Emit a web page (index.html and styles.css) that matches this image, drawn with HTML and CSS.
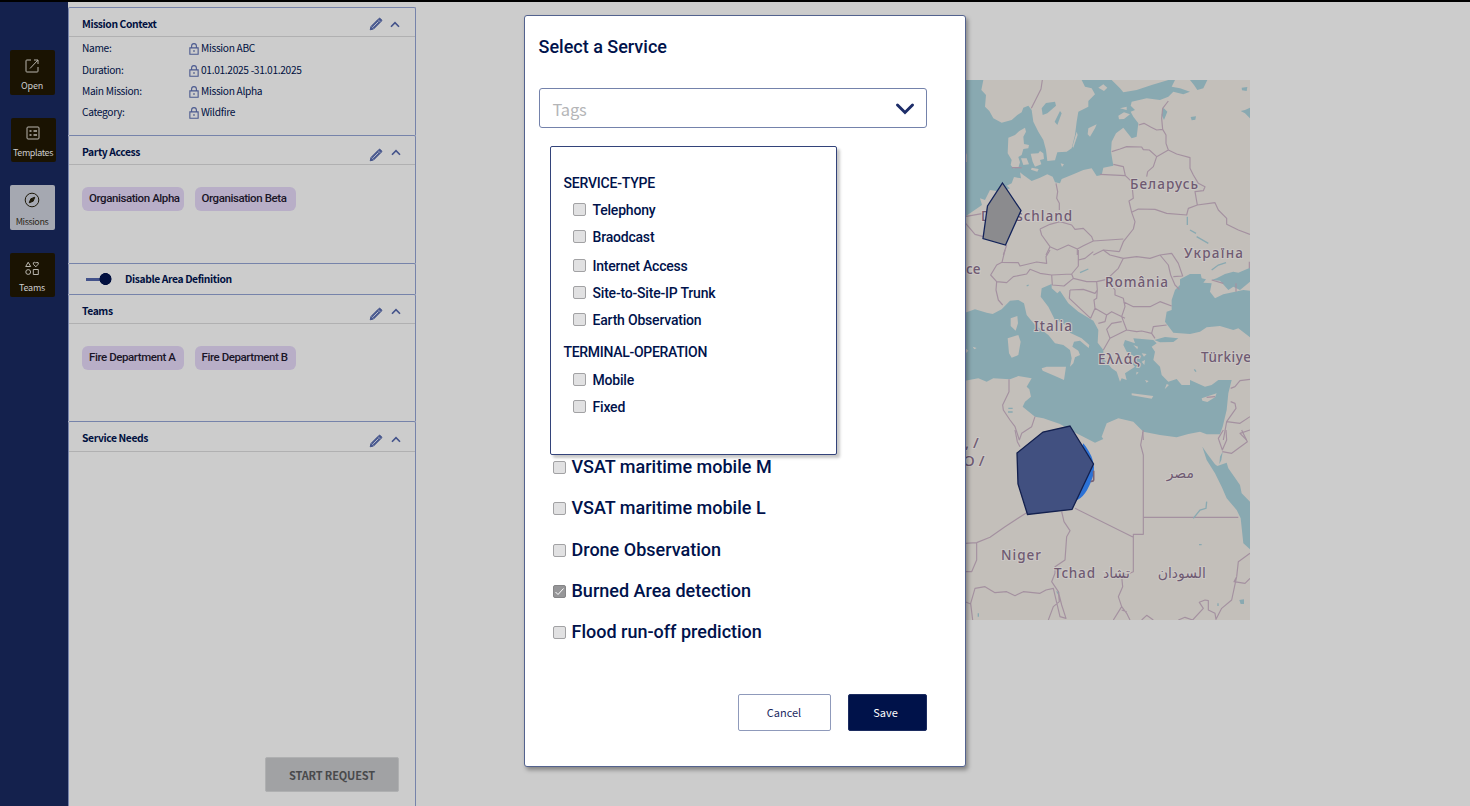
FILE: index.html
```
<!DOCTYPE html>
<html lang="en">
<head>
<meta charset="utf-8">
<title>Missions</title>
<link rel="stylesheet" href="styles.css">
</head>
<body>
<svg width="0" height="0" class="defs">
  <symbol id="pencil" viewBox="0 0 14 14"><path d="M1.2 12.8 2 9.400 9.800 1.600q.8-.8 1.600 0l1 1q.8.8 0 1.600L4.600 12z" fill="#4a5a91" stroke="#3d4d85" stroke-width=".9"/><path d="M4.200 9.800 9.400 4.600" stroke="#c3c6d0" stroke-width=".9"/><path d="m9 2.600 2.600 2.600M2.600 9.600l1.900 1.900" stroke="#b3b8c8" stroke-width=".7"/></symbol>
  <symbol id="up" viewBox="0 0 10 7"><path d="M1 5.800 5 1.600l4 4.200" fill="none" stroke="#43528a" stroke-width="1.600"/></symbol>
  <symbol id="lock" viewBox="0 0 9 11"><path d="M.7 4.500h7.600v5.800H.7zM2.300 4.500V2.800a2.200 2.200 0 0 1 4.400 0v1.700" fill="none" stroke="#4a598f" stroke-width="1"/><path d="M3.900 6.700h1.200v1.400H3.900z" fill="#3a4a83"/></symbol>
</svg>
<div class="app">
  <nav class="side">
    <a class="nav"><svg width="16" height="16" viewBox="0 0 16 16"><path d="M7 2H2.800Q2 2 2 2.800v10.400q0 .8.8.8h10.400q.8 0 .8-.8V9M10 2h4v4M14 2 6 10.500"/></svg><span>Open</span></a>
    <a class="nav shifted"><svg width="16" height="16" viewBox="0 0 16 16"><rect x="2" y="2" width="12" height="12" rx="1"/><path d="M4.500 6h2M8.500 6H12M4.500 10h2M8.500 10H12" stroke-width="1.500"/></svg><span>Templates</span></a>
    <a class="nav active"><svg width="16" height="16" viewBox="0 0 16 16"><circle cx="8" cy="8" r="6.800"/><path d="m10.800 5.200-1.600 4-4 1.600 1.600-4z" class="solid"/><circle cx="8" cy="8" r=".6"/></svg><span>Missions</span></a>
    <a class="nav last"><svg width="16" height="16" viewBox="0 0 16 16"><path d="M4.200 2.200 1.700 6.500h5zM11.800 6.800 9.400 4.200q-.8-1.900 1.200-1.900.8 0 1.200.9.4-.9 1.200-.9 2 0 1.200 1.900zM9.300 9.500h5v5h-5z"/><circle cx="4.200" cy="12" r="2.400"/></svg><span>Teams</span></a>
  </nav>
  <aside class="panel">
    <section class="card context">
      <header><h2>Mission Context</h2><svg class="pen"><use href="#pencil"/></svg><svg class="caret"><use href="#up"/></svg></header>
      <dl>
        <dt>Name:</dt><dd><svg><use href="#lock"/></svg>Mission ABC</dd>
        <dt>Duration:</dt><dd><svg><use href="#lock"/></svg>01.01.2025 -31.01.2025</dd>
        <dt>Main Mission:</dt><dd><svg><use href="#lock"/></svg>Mission Alpha</dd>
        <dt>Category:</dt><dd><svg><use href="#lock"/></svg>Wildfire</dd>
      </dl>
    </section>
    <section class="card party">
      <header><h2>Party Access</h2><svg class="pen low"><use href="#pencil"/></svg><svg class="caret"><use href="#up"/></svg></header>
      <div class="chips"><span>Organisation Alpha</span><span>Organisation Beta</span></div>
    </section>
    <section class="card area"><i class="toggle"></i><h2>Disable Area Definition</h2></section>
    <section class="card teams">
      <header><h2>Teams</h2><svg class="pen low"><use href="#pencil"/></svg><svg class="caret"><use href="#up"/></svg></header>
      <div class="chips"><span>Fire Department A</span><span>Fire Department B</span></div>
    </section>
    <section class="card needs">
      <header><h2>Service Needs</h2><svg class="pen low"><use href="#pencil"/></svg><svg class="caret"><use href="#up"/></svg></header>
      <button class="start">START REQUEST</button>
    </section>
  </aside>
  <main class="stage">
    <svg class="map" width="285" height="540" viewBox="965 80 285 540">
      <rect x="965" y="80" width="285" height="540" class="land"/>
      <!-- northern Europe -->
      <g transform="translate(960 75) scale(.33333)">
        <path class="sea" d="M15 15H70L64 45 78 60 75 95 88 108 100 130 125 143 155 135 172 120 185 112 190 98 205 92 215 105 220 140 235 170 250 195 258 225 262 258 285 256 292 232 320 230 335 220 345 180 350 140 355 110 385 95 385 78 405 58 395 40 375 35 365 15H455L480 40 490 52 530 45 575 30 625 15H645L635 35 660 40 690 50 670 58 640 50 625 65 600 75 560 70 515 80 512 92 525 105 512 110 520 125 535 145 530 185 515 190 490 158 468 175 455 200 453 230 460 272 430 278 425 300 410 303 395 280 370 285 340 298 305 312 300 325 285 322 278 305 262 298 240 308 215 318 190 300 180 292 183 310 162 306 155 325 140 332 150 340 125 350 90 345 75 375 60 370 66 390 30 415 15 425z"/>
        <path class="sea" d="M690 15H742L730 40 712 45 702 30zM245 100 258 84 285 80 288 92 262 115 248 120zM300 108 305 115 292 150 284 140zM610 98 622 110 612 135 605 120zM845 38 862 36 860 48 846 46zM692 126 708 124 706 134 695 136zM842 108 855 105 870 98V130L855 115z"/>
        <path class="land" d="M145 188 165 180 178 168 195 158 198 170 190 185 192 207 207 210 205 220 190 222 185 240 175 246 180 262 175 278 160 280 152 270 155 255 143 235zM183 250 200 250 207 268 190 270zM212 236 235 235 240 228 250 235 252 252 240 255 244 268 225 275 218 260zM215 278 236 282 232 290 213 284zM385 160 410 148 405 160 390 185 383 178zM475 122 492 112 510 118 492 132 477 133zM480 100 500 95 500 105zM350 170 353 180 340 218 337 215zM302 265 312 268 306 276zM415 38 430 28 442 38 432 48z"/>
        <path class="line" d="M247 15 243 42 228 72 214 100M155 278H185M536 150 552 145 572 156 590 165 608 163 605 130 608 100 625 78M608 163 618 180 618 205 625 225 590 245 568 225 550 224 545 216 500 215 480 222 455 230M625 225 650 237 690 248 690 280 700 300 715 325 735 335 730 347 705 350 712 390M590 245 580 275 563 290 560 305M460 268 490 275 496 302 420 298M496 302 515 320 520 370 507 378 515 412 525 440 520 462 490 500 478 530M515 412 535 402 585 403 620 415 680 420 685 400 712 390 765 383 775 405 800 430 800 448 835 465 870 478M288 325 293 350 290 370 298 385 298 405M240 462 270 448 300 440 335 450 345 463 370 460 395 485 400 498 490 492M400 498 370 512 352 522 325 510 292 525 270 515 245 480 240 462M352 522V540M270 515 258 540M15 425 70 415M15 443 45 478 70 485M140 510 130 540M400 540 430 525 478 530"/>
        <path class="river" d="M682 425V450M690 465 708 475M710 485 745 505"/>
      </g>
      <!-- Mediterranean and Black Sea -->
      <g transform="translate(960 250) scale(.33333)">
        <path class="sea" d="M15 188 45 178 80 188 98 192 125 178 150 152 175 150 192 160 200 195 225 225 265 255 285 280 310 285 330 300 335 325 330 350 340 340 345 322 360 315 355 302 337 290 342 275 360 272 386 294 388 285 365 265 330 248 325 230 300 215 285 210 265 170 242 140 245 115 275 102 275 115 292 130 300 122 325 160 355 185 400 212 415 240 413 278 430 300 430 325 455 355 470 365 480 395 485 385 500 390 495 370 525 350 515 340 525 320 500 305 490 285 495 270 525 280 520 265 580 270 590 280 575 290 585 305 580 330 600 350 605 375 625 395 650 387 665 405 690 405 690 390 735 410 755 405 775 390 815 390 805 430 800 480 788 530 780 553 740 553 720 545 685 552 650 562 600 555 550 545 520 515 475 505 440 520 425 560 430 567 405 578 370 560 340 545 300 522 250 505 225 500 188 470 195 455 213 440 208 418 200 410 215 385 175 378 150 388 100 385 80 395 55 385 15 392zM615 215 620 185 635 180 635 150 645 120 660 105 660 88 690 72 722 72 725 85 738 88 730 98 755 100 750 125 765 145 790 133 850 120 870 122V262L835 235 820 240 780 228 740 232 720 245 690 252 640 248zM755 90 770 85 795 72 820 65 835 68 870 53V95L840 120 820 110 805 120 780 92zM583 270 615 261 655 265 640 276 600 277z"/>
        <path class="land" d="M152 205 172 198 174 220 167 242 152 228zM143 265 175 255 182 275 175 315 155 323 147 310zM245 355 260 350 318 350 312 390 285 378 248 362zM515 430 580 438 575 446 515 436zM725 445 770 430 765 442 742 456 727 452zM15 293 25 302 15 312zM38 290 50 294 43 298z"/>
        <path class="land" d="m520 285 14 5-2 8zM545 310 560 312 552 320zM545 335 555 330 553 345zM530 365 536 368 528 374zM555 390 566 393 560 398zM620 402 627 405 614 418z"/>
        <path class="line" d="M135 0 126 37 110 45 92 75 110 95 108 120 115 150 128 165M126 37 175 38 180 48 230 36 260 40 258 20 270 0M110 95 140 98 160 80 200 72 210 58 240 70 275 75 335 72 355 48 355 0M275 75 277 105 312 108 340 85 335 72M340 85 380 95 410 95 440 88 475 55 490 25 450 15 430 0M355 30 375 25 400 5M490 25 530 20 570 25 600 15 625 45 632 75 645 105 658 118M600 15 635 10 655 40 668 78 640 80M410 95 412 120 410 145 402 150 405 175 392 205M330 120 370 118 405 130 412 120M330 120 328 145 360 175 392 205M405 175 440 195 455 185 495 205M440 195 435 215 415 220M440 88 465 120 465 135 490 145 495 170 485 200 500 240 450 265 440 238 455 220 485 215M490 155 520 170 570 170 600 155 635 168M500 240 530 245 545 243 575 250 580 230 620 225M575 250 585 265M450 265 430 300M870 388 840 392 825 410 812 415M812 455 825 460 828 475 800 515 790 570M800 515 840 520 870 500M870 540 840 550 860 570M147 388 147 425 128 465 130 480 150 510 165 530 178 570M225 500 215 530 185 550 178 570M548 545 550 570M755 90 790 100M828 100V125M868 35V55M740 442 765 440"/>
        <path class="river" d="M360 68 385 57M200 108 206 105M755 60 775 45 798 38M145 475H158M144 486H158M703 358 708 365"/>
      </g>
      <!-- North Africa -->
      <g transform="translate(960 430) scale(.33333)">
        <path class="sea" d="M727 50 742 72 765 103 772 108 800 98 805 115 840 165 845 190 870 215V358L850 340 842 265 830 240 800 205 785 170 765 130 740 90zM788 65 784 90 778 103 780 80zM838 510 852 508 852 522 842 522zM288 484 298 486 296 497z"/>
        <path class="line" d="M550 0 542 45 550 75V313H520V425L485 440 488 470 475 500 485 530 500 550 510 570M550 262H835M200 248 135 290 90 322 50 338 15 340M50 338V390L35 425H15M345 235 520 322M305 245 312 275 330 302 320 320 315 390 285 410 285 430 275 455 295 485 305 525 318 565 300 560 280 475 258 480 240 490 190 485 165 497 140 485 105 488 75 470 45 475 32 520 38 570M295 485 298 515 280 530 265 570M15 515 32 522M485 530 460 570M485 540 500 545M545 570 560 556 580 570M655 570 675 562 698 570 730 535 718 517 735 510 745 512 745 540 765 550 768 568 785 535 815 510 830 440 822 455 855 460 870 445M830 440 835 395 870 370M165 0 172 35 180 50M790 0 775 25 787 60 800 30 798 0M787 65 815 70 862 35 845 0"/>
        <path class="river" d="M740 215 738 235 720 240 700 265M717 344h8M774 520v8M55 550v10"/>
        <path d="M370 40Q410 90 400 135 378 205 345 212L330 150z" fill="#2c72d6"/>
        <path d="M401 122V150Q400 155 392 154" fill="none" stroke="#796477" stroke-width="5"/>
      </g>
      <g class="labels">
        <text x="1130" y="189" textLength="68">Беларусь</text>
        <text x="981" y="221" textLength="91">Deutschland</text>
        <text x="1184" y="258" textLength="59">Україна</text>
        <text x="1105" y="287" textLength="63">România</text>
        <text x="1034" y="331" textLength="38">Italia</text>
        <text x="1098" y="364" textLength="42">Ελλάς</text>
        <text x="1201" y="362" textLength="50">Türkiye</text>
        <text x="966" y="274">ce</text>
        <text x="1001" y="560" textLength="40">Niger</text>
        <text x="1054" y="578" textLength="41">Tchad</text>
        <text x="1130" y="578" class="ar" direction="rtl">تشاد</text>
        <text x="1194" y="478" class="ar" direction="rtl">مصر</text>
        <text x="1206" y="578" class="ar" direction="rtl">السودان</text>
        <text x="965" y="448" class="big">, /</text>
        <text x="963" y="466" class="big">O /</text>
        <text x="958" y="161">n</text>
      </g>
      <path d="M1002.500 183 1021 210.500 1005.500 245 983 238.500 987.500 206z" fill="#8b8b8e" stroke="#13235a" stroke-width="1.300"/>
      <path d="M1070 426 1093.500 464 1072 509.500 1027.500 514.500 1018 484 1017 453 1043 432z" fill="#415080" stroke="#13204e" stroke-width="1.300"/>
    </svg>
  </main>
  <div class="modal" role="dialog">
    <h1>Select a Service</h1>
    <div class="select"><span>Tags</span><svg width="20" height="14" viewBox="0 0 20 14"><path d="m2.500 3 7.500 7.500L17.500 3" fill="none" stroke="#1d2d69" stroke-width="3" stroke-linecap="round"/></svg></div>
    <ul class="services">
      <li><i class="box"></i>VSAT maritime mobile M</li>
      <li><i class="box"></i>VSAT maritime mobile L</li>
      <li><i class="box"></i>Drone Observation</li>
      <li><i class="box on"><svg width="11" height="11" viewBox="0 0 11 11"><path d="m1.500 6 2.500 2.500 5.500-6" fill="none" stroke="#fff" stroke-width="1"/></svg></i>Burned Area detection</li>
      <li><i class="box"></i>Flood run-off prediction</li>
    </ul>
    <footer><button class="cancel">Cancel</button><button class="save">Save</button></footer>
    <div class="menu">
      <h3>SERVICE-TYPE</h3>
      <ul>
        <li><i class="box"></i>Telephony</li>
        <li><i class="box"></i>Braodcast</li>
        <li class="gap"><i class="box"></i>Internet Access</li>
        <li><i class="box"></i>Site-to-Site-IP Trunk</li>
        <li><i class="box"></i>Earth Observation</li>
      </ul>
      <h3 class="second">TERMINAL-OPERATION</h3>
      <ul class="ops">
        <li><i class="box"></i>Mobile</li>
        <li><i class="box"></i>Fixed</li>
      </ul>
    </div>
  </div>
</div>
</body>
</html>
```
FILE: styles.css
```
* { box-sizing: border-box; }
body { margin: 0; background: #ccc; font-family: "Noto Sans CJK SC", "Noto Sans", sans-serif; color: #00103f; }
h1, h2, h3, ul, dl, dd { margin: 0; padding: 0; }
ul { list-style: none; }
button { font-family: inherit; padding: 0; }
.defs { position: absolute; }
.app { position: relative; display: flex; width: 1470px; height: 806px; overflow: hidden; border-top: 2px solid #000; }

.side { width: 68px; flex: none; background: #14214d; padding: 48px 0 0 10px; display: flex; flex-direction: column; gap: 23px; }
.nav { width: 45px; height: 44.500px; background: #1a1302; border-radius: 2px; display: flex; flex-direction: column; align-items: center; padding: 8px 1px 0 0; gap: 6px; color: #ccc; font-size: 9px; line-height: 12px; letter-spacing: -.2px; }
.nav svg { fill: none; stroke: #b9b6ae; stroke-width: 1; flex: none; }
.nav.shifted { margin-left: 1px; padding-top: 7px; letter-spacing: -.4px; }
.nav.active { background: #a5a8b1; color: #2c2718; padding-top: 7px; gap: 8px; letter-spacing: -.4px; }
.nav.active svg { stroke: #1d1808; }
.nav.last { padding-top: 7px; gap: 6px; }
.solid { fill: #1d1808; }

.panel { width: 348px; flex: none; padding: 5px 0 0; display: flex; flex-direction: column; }
.card { border: 1px solid #7683aa; border-bottom: 0; flex: none; border-radius: 2px 2px 0 0; }
.card header { height: 29px; border-bottom: 1px solid #b0b0b1; padding: 0 14px 0 13px; display: flex; align-items: center; }
.card h2 { font-size: 10.300px; line-height: 16px; font-weight: 700; letter-spacing: -.38px; flex: 1; padding-top: 3px; }
.pen { width: 14px; height: 14px; margin: 4px 7px 0 0; }
.pen.low { margin: 9px 8px 0 0; }
.caret { width: 10px; height: 7px; margin-top: 5px; }
.party { height: 128px; }
.area { height: 31px; display: flex; align-items: center; padding-left: 17px; }
.card.area h2 { padding: 0; }
.toggle { width: 26px; height: 12px; margin-right: 13px; background: radial-gradient(circle at 19.500px 6px, #02103f 5.700px, transparent 6.300px), linear-gradient(#43528a, #43528a) 0 5px / 20px 3px no-repeat; }
.teams { height: 127px; }
.needs { height: 386px; display: flex; flex-direction: column; }
.needs header { height: 30px; }
.context { height: 128px; }
.context header { padding-right: 15px; }
.context dl { display: grid; grid-template-columns: 107px 1fr; grid-template-rows: 22px 21px 21px 21px; align-items: center; padding: 0 0 0 13px; font-size: 10.200px; letter-spacing: -.32px; line-height: 16px; }
.context dd { display: flex; align-items: center; gap: 2px; }
.context dd svg { width: 10px; height: 12px; margin-top: 2px; }
.chips { display: flex; gap: 11px; padding: 22px 0 0 13px; }
.chips span { width: 101.500px; height: 24px; background: #b8aec7; border-radius: 6px; padding: 0 0 0 7px; font: 500 11.500px/22px Roboto, sans-serif; letter-spacing: -.42px; color: #1a1527; white-space: nowrap; }
.start { width: 134px; height: 35px; margin: 305px 0 0 196px; border: 1px solid #afb0b1; border-radius: 2px; background: #a1a2a4; color: #494a4c; font-size: 11px; letter-spacing: -.15px; font-weight: 700; }

.stage { padding: 78px 0 0 549px; }
.map { display: block; }
.land { fill: #c3bfba; }
.sea { fill: #89a9b1; }
.line { fill: none; stroke: #a491a0; stroke-width: 3.500; stroke-linejoin: round; }
.river { fill: none; stroke: #89a9b1; stroke-width: 4; }
.labels { font: 500 13.500px "Noto Sans", sans-serif; fill: #6f5a72; stroke: #cbc7c5; stroke-width: 2px; paint-order: stroke; }
.labels .ar { font: 14px "DejaVu Sans", sans-serif; }
.labels .big { font-size: 15px; }

.modal { position: absolute; left: 523.500px; top: 13px; width: 442px; height: 752px; background: #fff; border: 1px solid #53628e; border-radius: 3px; box-shadow: 2px 3px 4px rgba(0,0,0,.35); padding: 20px 38px 0 14px; color: #00124b; }
.modal h1 { font: 500 18px/21px Roboto, sans-serif; }
.select { height: 40px; margin-top: 31px; border: 1px solid #7482ab; border-radius: 3px; display: flex; align-items: center; justify-content: space-between; padding: 2px 11px 0 13px; color: #b4b5b7; font-size: 16.500px; line-height: 26px; letter-spacing: -.2px; }
.services { margin: 318px 0 0 14px; font: 500 18px/21px Roboto, sans-serif; }
.services li { height: 41.250px; display: flex; align-items: center; gap: 6px; }
.services .box { margin-top: 2px; }
.box { width: 13px; height: 13px; flex: none; border: 1px solid #a2a2a4; border-radius: 2px; background: #e1e1e2; }
.box.on { background: #969698; border-color: #858587; }
.box svg { display: block; }
footer { display: flex; justify-content: flex-end; gap: 17px; margin-top: 42px; }
footer button { font-size: 11px; height: 37px; border-radius: 2px; padding-bottom: 2px; }
.cancel { width: 93px; background: #fff; border: 1px solid #8f9abb; color: #1c2a5f; }
.save { width: 79px; background: #00124a; border: 1px solid #1c2c60; color: #fff; padding-right: 3px; }
.menu { position: absolute; left: 25px; top: 130px; width: 287px; height: 309px; background: #fff; border: 1px solid #33437a; border-radius: 2px; box-shadow: 3px 3px 3px rgba(0,0,0,.22); padding: 27px 13px 0; font: 500 14px/18px Roboto, sans-serif; letter-spacing: -.2px; }
.menu h3 { font: inherit; line-height: 18px; }
.menu .second { margin-top: 10px; letter-spacing: -.3px; }
.menu ul { padding: 4px 0 0 9px; }
.menu .ops { padding-top: 5px; }
.menu li { height: 27px; display: flex; align-items: center; gap: 7px; }
.menu .gap { margin-top: 2px; }
```
